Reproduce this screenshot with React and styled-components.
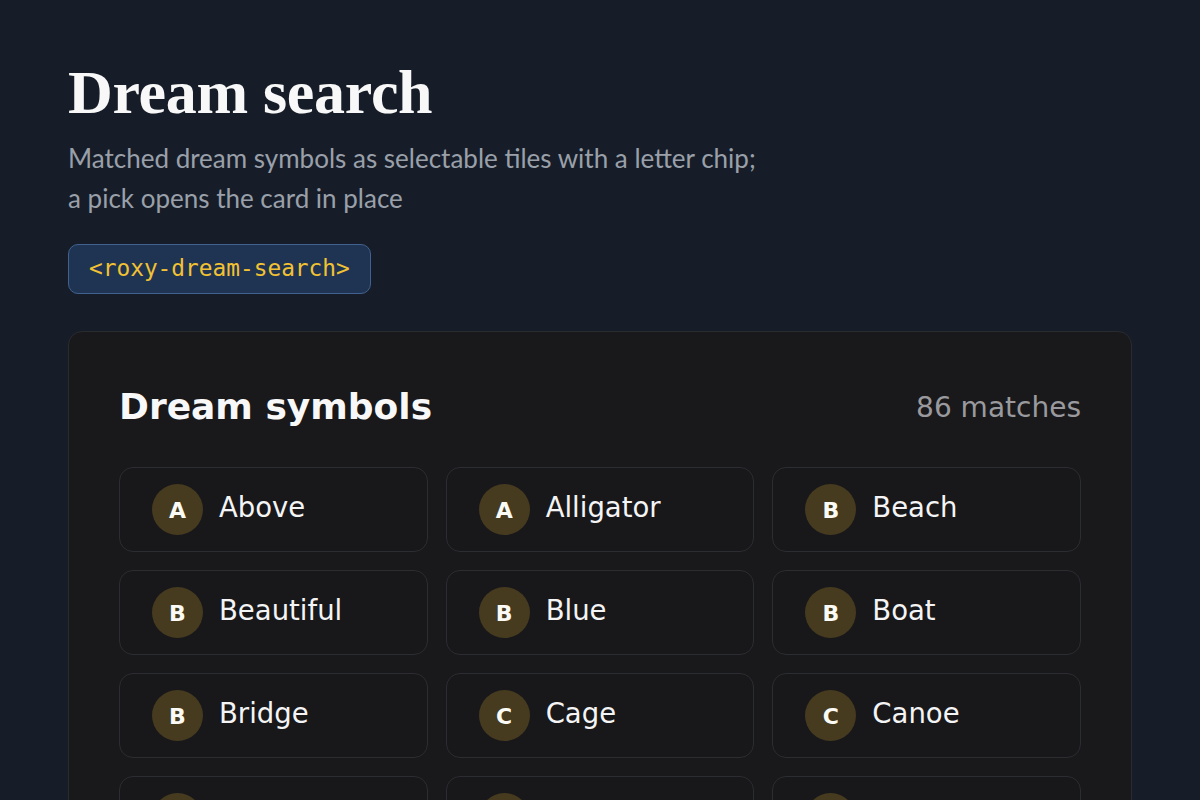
import React from 'react';
import styled, { createGlobalStyle } from 'styled-components';

const GlobalStyle = createGlobalStyle`
  html, body {
    margin: 0;
    padding: 0;
    background: #161d28;
  }
  body {
    font-family: "DejaVu Sans", sans-serif;
    color: #f4f4f5;
  }
`;

const Page = styled.main`
  padding: 56px 68px 0 68px;
  min-height: 800px;
  box-sizing: border-box;
`;

const Title = styled.h1`
  margin: 0;
  font-family: "Liberation Serif", serif;
  font-weight: 700;
  font-size: 62px;
  line-height: 72px;
  letter-spacing: -0.3px;
  color: #f8f8f8;
`;

const Subtitle = styled.p`
  margin: 10px 0 0 0;
  max-width: 695px;
  font-family: Lato, sans-serif;
  font-weight: 400;
  font-size: 26px;
  line-height: 40px;
  color: #9aa0aa;
`;

const Tag = styled.code`
  display: inline-block;
  margin-top: 26px;
  padding: 0 20px;
  height: 50px;
  line-height: 47px;
  box-sizing: border-box;
  border: 1.5px solid #41618f;
  border-radius: 10px;
  background: #1f3452;
  font-family: "DejaVu Sans Mono", monospace;
  font-size: 22.8px;
  color: #f2c233;
`;

const Card = styled.section`
  margin-top: 37px;
  padding: 54px 50px 40px 50px;
  background: #19191c;
  border: 1px solid #2a2b2f;
  border-radius: 14px;
`;

const CardHeader = styled.div`
  display: flex;
  align-items: center;
  justify-content: space-between;
  margin-bottom: 39px;
`;

const Heading = styled.h2`
  margin: 0;
  font-size: 36px;
  line-height: 42px;
  font-weight: 700;
  color: #f8f8f8;
`;

const Count = styled.span`
  font-size: 28px;
  color: #9a9a9e;
`;

const Grid = styled.div`
  display: grid;
  grid-template-columns: repeat(3, 1fr);
  gap: 18px;
`;

const Tile = styled.button`
  display: flex;
  align-items: center;
  gap: 16px;
  height: 85px;
  padding: 0 32px;
  background: #18181b;
  border: 1px solid #2c2d31;
  border-radius: 14px;
  font-family: "DejaVu Sans", sans-serif;
  font-size: 27.5px;
  line-height: 1;
  color: #f4f4f5;
  text-align: left;
  cursor: pointer;
`;

const Chip = styled.span`
  flex: 0 0 auto;
  width: 51px;
  height: 51px;
  border-radius: 50%;
  background: #463a1f;
  display: flex;
  align-items: center;
  justify-content: center;
  font-size: 22px;
  font-weight: 700;
  color: #fbfaf5;
  padding-top: 3px;
  box-sizing: border-box;
`;

const Label = styled.span`
  padding-bottom: 4px;
`;

const symbols = [
  'Above', 'Alligator', 'Beach',
  'Beautiful', 'Blue', 'Boat',
  'Bridge', 'Cage', 'Canoe',
  'Car', 'Castle', 'Cat',
];

export default function App() {
  return (
    <>
      <GlobalStyle />
      <Page>
        <Title>Dream search</Title>
        <Subtitle>
          Matched dream symbols as selectable tiles with a letter chip; a pick opens the card in place
        </Subtitle>
        <Tag>&lt;roxy-dream-search&gt;</Tag>
        <Card>
          <CardHeader>
            <Heading>Dream symbols</Heading>
            <Count>86 matches</Count>
          </CardHeader>
          <Grid>
            {symbols.map((name) => (
              <Tile key={name}>
                <Chip>{name[0]}</Chip>
                <Label>{name}</Label>
              </Tile>
            ))}
          </Grid>
        </Card>
      </Page>
    </>
  );
}
